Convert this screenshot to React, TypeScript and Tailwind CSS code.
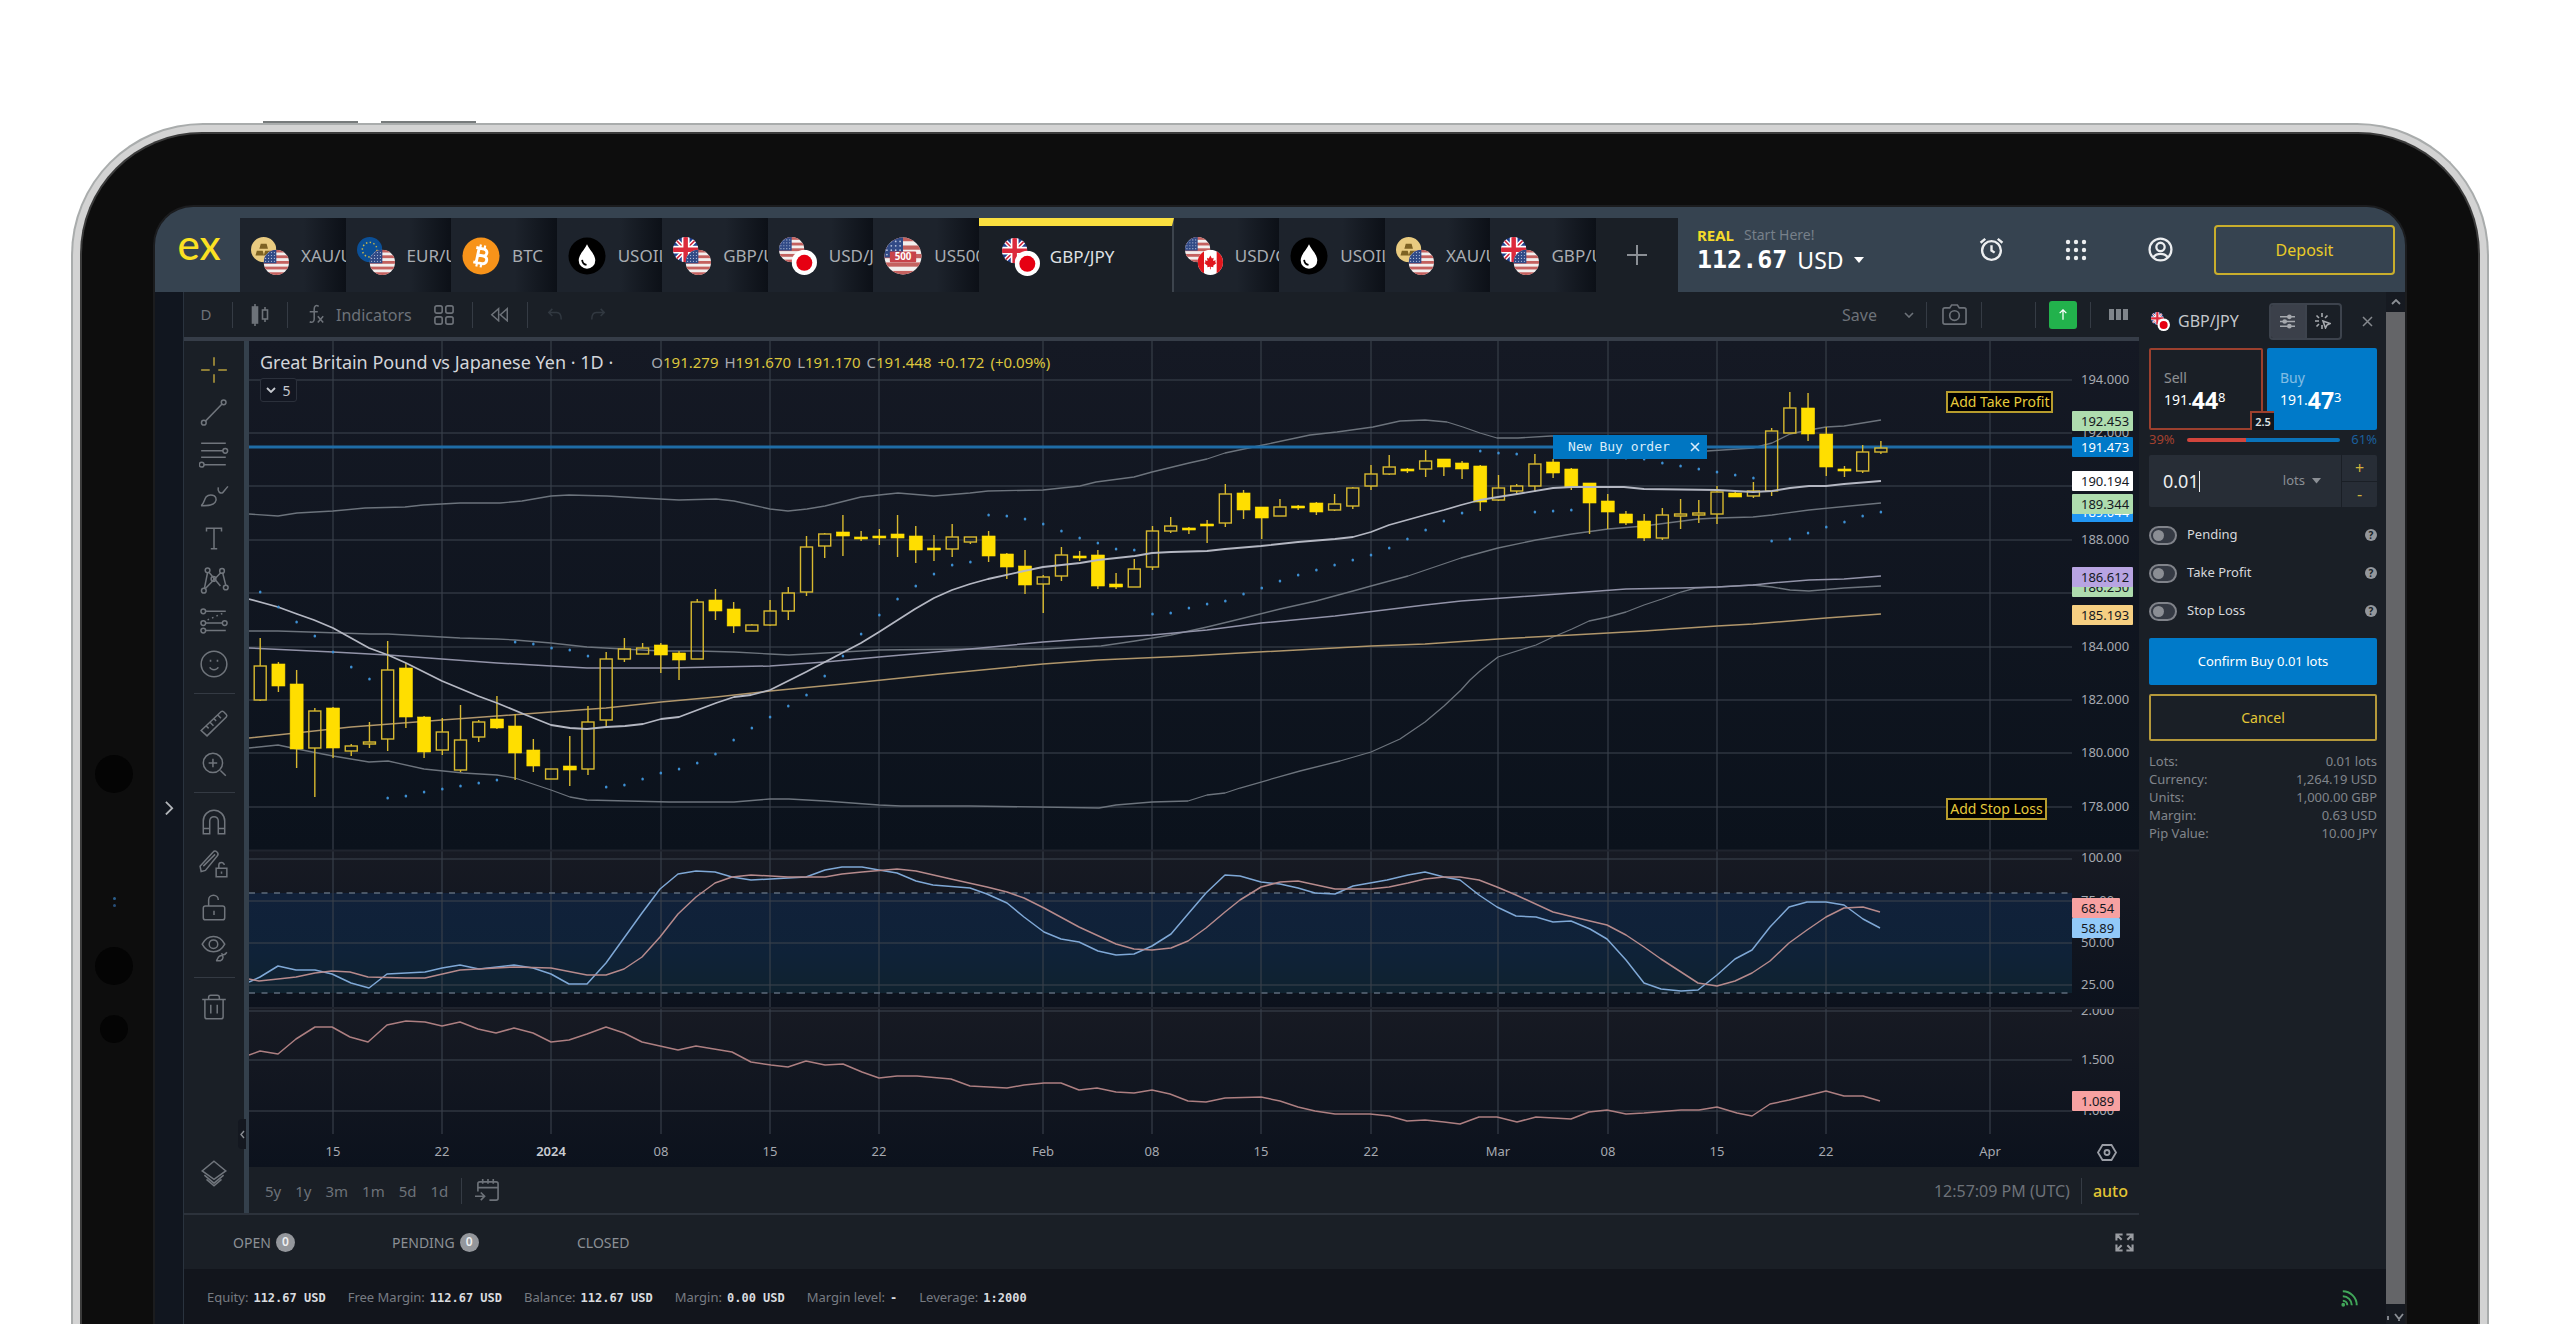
import { useId, useState } from "react";
import type { ReactNode } from "react";

/* ---------- flags and instrument badges ---------- */

type FlagKind = "us" | "uk" | "eu" | "jp" | "ca" | "xau";

function FlagArt({ kind }: { kind: FlagKind }) {
  switch (kind) {
    case "us":
      return (
        <g>
          <rect width="26" height="26" fill="#f3efee" />
          {[0, 1, 2, 3, 4].map((n) => (
            <rect key={n} y={n * 5.8} width="26" height="2.9" fill="#c4615f" />
          ))}
          <rect width="13" height="14" fill="#314a86" />
          {[2, 5, 8, 11].map((x) =>
            [3, 6, 9, 12].map((y) => <circle key={`${x}-${y}`} cx={x} cy={y} r=".6" fill="#b9c4dd" />),
          )}
        </g>
      );
    case "uk":
      return (
        <g>
          <rect width="26" height="26" fill="#21408f" />
          <path d="M0 0 26 26M26 0 0 26" stroke="#fff" strokeWidth="4.5" />
          <path d="M0 0 26 26M26 0 0 26" stroke="#d3273b" strokeWidth="1.6" />
          <path d="M13 0V26M0 13H26" stroke="#fff" strokeWidth="8" />
          <path d="M13 0V26M0 13H26" stroke="#dc2a3c" strokeWidth="4.6" />
        </g>
      );
    case "eu":
      return (
        <g>
          <rect width="26" height="26" fill="#0b4f96" />
          <circle cx="13" cy="13" r="7.5" fill="none" stroke="#c9b64a" strokeWidth="1.5" strokeDasharray="1.5 2.4" />
        </g>
      );
    case "jp":
      return (
        <g>
          <rect width="26" height="26" fill="#fff" />
          <circle cx="13" cy="13.5" r="8.2" fill="#e60012" />
        </g>
      );
    case "ca":
      return (
        <g>
          <rect width="26" height="26" fill="#fff" />
          <rect width="6.5" height="26" fill="#e0161c" />
          <rect x="19.5" width="6.5" height="26" fill="#e0161c" />
          <path
            d="M13 6l1.6 3 1.8-.6-.5 3.2 2.6-.8-.5 2 1.3.9-3.4 2.9.3 1.4-2.8-.4V20h-.8v-2.4l-2.8.4.3-1.4-3.4-2.9 1.3-.9-.5-2 2.6.8-.5-3.2 1.8.6z"
            fill="#e0161c"
          />
        </g>
      );
    case "xau":
      return (
        <g>
          <rect width="26" height="26" fill="#e9cb80" />
          <path d="M10 7h6l1.4 5H8.600zM6 14h6l1.400 5H4.600zM14.500 14h6l1.400 5h-8.800z" fill="#7d6223" />
        </g>
      );
  }
}

function FlagPair({ back, front, className }: { back: FlagKind; front: FlagKind; className: string }) {
  const id = useId();
  return (
    <svg viewBox="0 0 39 39" className={className} aria-hidden="true">
      <defs>
        <clipPath id={`${id}c`}>
          <circle cx="13" cy="13" r="13" />
        </clipPath>
      </defs>
      <g clipPath={`url(#${id}c)`}>
        <FlagArt kind={back} />
      </g>
      <g transform="translate(13 13)">
        <g clipPath={`url(#${id}c)`}>
          <FlagArt kind={front} />
        </g>
      </g>
    </svg>
  );
}

function BitcoinBadge() {
  return (
    <svg viewBox="0 0 39 39" className="size-[38px] shrink-0" aria-hidden="true">
      <circle cx="19.500" cy="19.500" r="19" fill="#f7931a" />
      <g transform="rotate(12 19.500 19.500)" fill="none" stroke="#fff" strokeWidth="3">
        <path d="M13 12h8c5 0 5 7 0 7h-5 6c5.500 0 5.500 8 0 8h-9M16 12v15" />
        <path d="M17 8v4M21.500 8v4M17 27v4M21.500 27v4" strokeWidth="2.200" />
      </g>
    </svg>
  );
}

function OilBadge() {
  return (
    <svg viewBox="0 0 39 39" className="size-[38px] shrink-0" aria-hidden="true">
      <circle cx="19.500" cy="19.500" r="19" fill="#000" />
      <path d="M19.500 7.500c2 5 8.500 10.500 8.500 16.500a8.500 8.500 0 0 1-17 0c0-6 6.500-11.500 8.500-16.500z" fill="#fff" />
      <path d="M14.500 23.500c.3 3 2 4.700 4.500 5.200" stroke="#000" strokeWidth="1.800" fill="none" />
    </svg>
  );
}

function IndexBadge() {
  const id = useId();
  return (
    <svg viewBox="0 0 39 39" className="size-[38px] shrink-0" aria-hidden="true">
      <defs>
        <clipPath id={`${id}c`}>
          <circle cx="19.500" cy="19.500" r="19" />
        </clipPath>
      </defs>
      <g clipPath={`url(#${id}c)`}>
        <g transform="scale(1.500)">
          <FlagArt kind="us" />
        </g>
        <rect x="6" y="15" width="27" height="11" rx="1" fill="#c8434a" />
      </g>
      <text x="19.500" y="24" textAnchor="middle" fontSize="10" fontWeight="700" fill="#fff" fontFamily="Noto Sans, sans-serif">
        500
      </text>
    </svg>
  );
}

/* ---------- header ---------- */

const pair = (back: FlagKind, front: FlagKind) => (
  <FlagPair back={back} front={front} className="size-[38px] shrink-0" />
);

const tabs: { name: string; icon: ReactNode; active?: boolean }[] = [
  { name: "XAU/USD", icon: pair("xau", "us") },
  { name: "EUR/USD", icon: pair("eu", "us") },
  { name: "BTC", icon: <BitcoinBadge /> },
  { name: "USOIL", icon: <OilBadge /> },
  { name: "GBP/USD", icon: pair("uk", "us") },
  { name: "USD/JPY", icon: pair("us", "jp") },
  { name: "US500", icon: <IndexBadge /> },
  { name: "GBP/JPY", icon: pair("uk", "jp"), active: true },
  { name: "USD/CAD", icon: pair("us", "ca") },
  { name: "USOIL", icon: <OilBadge /> },
  { name: "XAU/USD", icon: pair("xau", "us") },
  { name: "GBP/USD", icon: pair("uk", "us") },
];

function Header() {
  return (
    <header className="flex h-[85px] shrink-0 items-stretch bg-[#364350]">
      <a
        href="#home"
        className="flex w-[85px] shrink-0 items-start justify-center pt-[13px] pl-[3px] font-['Lato',sans-serif] text-[42px] leading-[48px] font-medium text-[#fbe122]"
      >
        ex
      </a>
      <nav className="mt-[11px] grid min-w-0 flex-1 grid-cols-[repeat(7,1fr)_195px_repeat(4,1fr)_82px] bg-[#1a1f26]">
        {tabs.map((t, i) =>
          t.active ? (
            <button
              key={i}
              className="flex items-center gap-[10px] border-t-8 border-r-2 border-t-[#fadf3f] border-r-[#3d444d] bg-[#1a1f26] pb-[4px] pl-[23px] text-[17px] text-[#dfe1e4]"
            >
              {t.icon}
              {t.name}
            </button>
          ) : (
            <button
              key={i}
              className="flex items-center gap-[12px] overflow-hidden bg-linear-to-r from-[#1d232c] from-60% to-[#0c1017] pt-[2px] pl-[11px] text-[17px] text-[#a9adb2]"
            >
              {t.icon}
              <span className="overflow-hidden whitespace-nowrap">{t.name}</span>
            </button>
          ),
        )}
        <button aria-label="Add instrument" className="flex items-center justify-center text-[#8b8f95]">
          <svg viewBox="0 0 22 22" className="size-[22px]" stroke="currentColor" strokeWidth="2">
            <path d="M11 1v20M1 11h20" />
          </svg>
        </button>
      </nav>
      <div className="flex w-[727px] shrink-0 items-center pr-[10px] pl-[19px]">
        <button className="flex flex-col text-left">
          <span className="flex gap-[10px] text-[15px] leading-[20px]">
            <b className="text-[#f5da2a]">REAL</b>
            <span className="text-[14px] text-[#77808a]">Start Here!</span>
          </span>
          <span className="flex items-center gap-[10px] text-[23px] leading-[30px] text-white">
            <b className="font-['DejaVu_Sans_Mono',monospace] text-[25px]">112.67</b>
            <span>USD</span>
            <svg viewBox="0 0 10 6" className="w-[10px]" fill="currentColor">
              <path d="M0 0h10L5 6z" />
            </svg>
          </span>
        </button>
        <div className="ml-auto flex items-center gap-[60px] pr-[41px] text-[#eceef0]">
          <button aria-label="Price alerts">
            <svg viewBox="0 0 24 24" className="size-[25px]" fill="none" stroke="currentColor" strokeWidth="2.300">
              <circle cx="12" cy="13" r="9" />
              <path d="M12 8v5l3 2M1.500 5.500 6 1.800M22.500 5.500 18 1.800" />
            </svg>
          </button>
          <button aria-label="Applications">
            <svg viewBox="0 0 24 24" className="size-[24px]" fill="currentColor">
              {[4, 12, 20].map((x) => [4, 12, 20].map((y) => <circle key={`${x}${y}`} cx={x} cy={y} r="2.200" />))}
            </svg>
          </button>
          <button aria-label="Profile">
            <svg viewBox="0 0 24 24" className="size-[25px]" fill="none" stroke="currentColor" strokeWidth="2.200">
              <circle cx="12" cy="12" r="10.500" />
              <circle cx="12" cy="9.500" r="4" />
              <path d="M5 19.500c3-4.500 11-4.500 14 0" />
            </svg>
          </button>
        </div>
        <button className="h-[50px] w-[181px] rounded-[4px] border-2 border-[#c9ae2c] text-[16px] text-[#e9cb27]">
          Deposit
        </button>
      </div>
    </header>
  );
}

/* ---------- chart toolbar ---------- */

const Sep = () => <span className="h-[26px] w-px bg-[#353b44]" />;

function TopToolbar() {
  return (
    <div className="flex h-[49px] shrink-0 items-center border-b-4 border-[#363d48] text-[16px] text-[#6d7279]">
      <button className="w-[48px] pr-[4px] text-[15px]">D</button>
      <Sep />
      <button aria-label="Candle style" className="flex w-[54px] justify-center">
        <svg viewBox="0 0 20 22" className="w-[20px]" fill="none" stroke="currentColor" strokeWidth="1.600">
          <path d="M5 0v3M5 19v3M15 3v3M15 15v3" />
          <rect x="2.500" y="3" width="5" height="16" fill="currentColor" />
          <rect x="12.500" y="6" width="5" height="9" />
        </svg>
      </button>
      <Sep />
      <button className="flex items-center gap-[11px] pl-[19px]">
        <svg viewBox="0 0 20 24" className="h-[23px] w-[18px]" fill="none" stroke="currentColor" strokeWidth="1.700">
          <path d="M13 3c-3-2-5-.5-5 3v11c0 3-2 4.500-5 3M3 9h9M12 14l6 7M18 14l-6 7" />
        </svg>
        <span>Indicators</span>
      </button>
      <button aria-label="Layouts" className="flex w-[60px] justify-center pl-[4px]">
        <svg viewBox="0 0 22 22" className="w-[20px]" fill="none" stroke="currentColor" strokeWidth="1.800">
          {[1, 13].map((x) => [1, 13].map((y) => <rect key={`${x}${y}`} x={x} y={y} width="8" height="8" rx="2" />))}
        </svg>
      </button>
      <Sep />
      <button aria-label="Replay" className="flex w-[54px] justify-center">
        <svg viewBox="0 0 22 18" className="w-[19px]" fill="none" stroke="currentColor" strokeWidth="1.700">
          <path d="M10 2v14L2 9zM20 2v14l-8-7z" />
        </svg>
      </button>
      <Sep />
      <button aria-label="Undo" className="flex w-[54px] justify-center text-[#313840]">
        <svg viewBox="0 0 18 14" className="w-[16px]" fill="none" stroke="currentColor" strokeWidth="1.700">
          <path d="M6 1 2 5l4 4M2 5h9c4 0 5 3 5 8" />
        </svg>
      </button>
      <button aria-label="Redo" className="flex w-[32px] justify-center text-[#313840]">
        <svg viewBox="0 0 18 14" className="w-[16px]" fill="none" stroke="currentColor" strokeWidth="1.700">
          <path d="m12 1 4 4-4 4M16 5H7C3 5 2 8 2 13" />
        </svg>
      </button>
      <button className="ml-auto pr-[27px]">Save</button>
      <button aria-label="Save options" className="pr-[12px]">
        <svg viewBox="0 0 10 6" className="w-[10px]" fill="none" stroke="currentColor" strokeWidth="1.600">
          <path d="m1 1 4 4 4-4" />
        </svg>
      </button>
      <Sep />
      <button aria-label="Snapshot" className="flex w-[54px] justify-center">
        <svg viewBox="0 0 26 22" className="w-[25px]" fill="none" stroke="currentColor" strokeWidth="1.700">
          <path d="M3 4h5l2-3h6l2 3h5a2 2 0 0 1 2 2v13a2 2 0 0 1-2 2H3a2 2 0 0 1-2-2V6a2 2 0 0 1 2-2z" />
          <circle cx="13" cy="12" r="5" />
        </svg>
      </button>
      <Sep />
      <span className="w-[53px]" />
      <Sep />
      <button aria-label="Publish" className="mx-[13px] flex h-[28px] w-[28px] items-center justify-center rounded-[3px] bg-[#22b24c] text-white">
        <svg viewBox="0 0 12 14" className="w-[10px]" fill="none" stroke="currentColor" strokeWidth="1.500">
          <path d="M6 13V1M2 5l4-4 4 4" />
        </svg>
      </button>
      <Sep />
      <button aria-label="Columns" className="mr-[11px] ml-[18px]">
        <svg viewBox="0 0 19 11" className="w-[19px]" fill="#80858b">
          <path d="M0 0h5v11H0zM7 0h5v11H7zM14 0h5v11h-5z" />
        </svg>
      </button>
    </div>
  );
}

/* ---------- drawing tools ---------- */

function Tool({ label, children, className = "h-[42px]" }: { label: string; children: ReactNode; className?: string }) {
  return (
    <button aria-label={label} className={`flex w-full shrink-0 items-center justify-center ${className}`}>
      <svg viewBox="0 0 28 28" className="size-[30px]" fill="none" stroke="currentColor" strokeWidth="1.400">
        {children}
      </svg>
    </button>
  );
}

const ToolSep = () => <hr className="my-[8px] w-[41px] shrink-0 border-[#343a43]" />;

function DrawingTools() {
  return (
    <div className="flex w-[65px] shrink-0 flex-col border-r-[5px] border-[#34404c]">
      <div className="relative flex flex-1 flex-col items-center pt-[8px] text-[#70757c]">
        <Tool label="Crosshair">
          <path d="M14 2v8M14 18v8M2 14h8M18 14h8" stroke="#b79f3c" />
        </Tool>
        <Tool label="Trend line">
          <path d="m6 22.500 15.500-16" />
          <circle cx="4.500" cy="24" r="2.200" />
          <circle cx="23" cy="5" r="2.200" />
        </Tool>
        <Tool label="Fib retracement">
          <path d="M2 4h23M2 11h20.500M2 17h23M4.500 24H25" />
          <circle cx="24.500" cy="11" r="2.200" />
          <circle cx="2.500" cy="24" r="2.200" />
        </Tool>
        <Tool label="Brush">
          <path d="M2 23c4-2 2-10 9-10 5 0 6 4 4 7-2 3-7 3-13 3zM18 6c-1 4 2 6 4 5l5-6" />
        </Tool>
        <Tool label="Text">
          <path d="M7 8V5h14v3M14 5v19M11 24h6" />
        </Tool>
        <Tool label="Patterns">
          <path d="m5 22 3-15M9.500 7 20 19.500M22 7l3 12M20.500 7 6 22M13 13l2 1" />
          <circle cx="8" cy="5" r="2.200" />
          <circle cx="21.500" cy="5.500" r="2.200" />
          <circle cx="4.500" cy="24" r="2.200" />
          <circle cx="25" cy="21" r="2.200" />
          <circle cx="13.500" cy="13" r="2.200" />
        </Tool>
        <Tool label="Forecasting">
          <path d="M6 4h19M6 15h16M6 22h19" />
          <path d="m8 12 14-6" strokeDasharray="1.500 3" />
          <circle cx="4" cy="4" r="2.200" />
          <circle cx="4" cy="15" r="2.200" />
          <circle cx="24" cy="15" r="2.200" />
          <circle cx="4" cy="22" r="2.200" />
        </Tool>
        <Tool label="Icons">
          <circle cx="14" cy="14" r="12" />
          <path d="M10 17c1.500 3 6.500 3 8 0" />
          <path d="M10 11h1.500M16.500 11H18" strokeWidth="2" />
        </Tool>
        <ToolSep />
        <Tool label="Measure" className="h-[41px]">
          <path d="M2 21 20.500 3.500a2 2 0 0 1 2.500 0L25.500 6a2 2 0 0 1 0 2.500L7.500 26zM7 17l2 2M10.500 13.500l3 3M14 10l2 2M17.500 6.500l3 3" />
        </Tool>
        <Tool label="Zoom in" className="h-[41px]">
          <circle cx="13" cy="13" r="9" />
          <path d="m20 20 5 5M13 9v8M9 13h8" />
        </Tool>
        <ToolSep />
        <Tool label="Magnet" className="h-[42px]">
          <path d="M4 25V13a10 10 0 0 1 20 0v12h-6V13a4 4 0 0 0-8 0v12zM4 20h6M18 20h6" />
        </Tool>
        <Tool label="Lock drawings" className="h-[42px]">
          <path d="M2 21 1 16 13 3a2.500 2.500 0 0 1 4 3.500L6 20zM4 16 15 5M16 18h10v8H16zM18.500 18v-3a2.500 2.500 0 0 1 5 0M21 21v2" />
        </Tool>
        <Tool label="Unlock all" className="h-[44px]">
          <rect x="4" y="13" width="20" height="13" rx="2" />
          <path d="M9 13V7.500a4.500 4.500 0 0 1 9 0M14 17.500v4" />
        </Tool>
        <Tool label="Hide drawings" className="h-[40px]">
          <path d="M3 9.500c5-9.500 16-9.500 21 0-5 9.500-16 9.500-21 0z" />
          <circle cx="13.500" cy="9.500" r="4" />
          <path d="M16 25c2-1 1-5 5-5 2 0 2 4-1 5zM21 18c1 2 3 2 5-1" />
        </Tool>
        <ToolSep />
        <Tool label="Delete" className="h-[42px]">
          <path d="M3 7h22M9 7V5a2 2 0 0 1 2-2h6a2 2 0 0 1 2 2v2M5.500 7v16a2 2 0 0 0 2 2h13a2 2 0 0 0 2-2V7M11 12v8M17 12v8" />
        </Tool>
        <div className="mt-auto mb-[20px]">
          <Tool label="Object tree" className="h-[40px]">
            <path d="M14 3 25 12 14 20 3 12zM5 16l9 7.500 9-7.500M7 20l7 6 7-6" />
          </Tool>
        </div>
        <button
          aria-label="Hide drawing tools"
          className="absolute right-[-2px] bottom-[64px] flex h-[30px] w-[8px] items-center justify-center rounded-l-[4px] bg-[#141820] text-[#8b8f95]"
        >
          <svg viewBox="0 0 5 9" className="w-[5px]" fill="none" stroke="currentColor" strokeWidth="1.400">
            <path d="M4 1 1 4.500 4 8" />
          </svg>
        </button>
      </div>
    </div>
  );
}

/* ---------- chart data ---------- */

const barX = (i: number) => 260.2 + 18.21 * i;

/* [high, open side, close side, low, filled] per trading day, in chart units */
const candles: [number, number, number, number, 0 | 1][] = [
  [638, 666, 700, 701, 0], [662, 664, 686, 692, 1], [670, 684, 749, 768, 1], [708, 711, 748, 797, 0],
  [707, 708, 748, 758, 1], [744, 746, 751, 756, 0], [722, 742, 744, 748, 0], [641, 670, 739, 751, 0],
  [663, 668, 717, 728, 1], [716, 717, 752, 758, 1], [718, 732, 750, 755, 0], [705, 740, 770, 772, 0],
  [720, 722, 737, 742, 0], [696, 719, 728, 729, 1], [714, 726, 753, 780, 1], [739, 750, 766, 772, 1],
  [769, 769, 779, 779, 0], [736, 766, 770, 786, 1], [706, 722, 769, 775, 0], [652, 659, 720, 726, 0],
  [638, 649, 659, 662, 0], [643, 648, 654, 654, 0], [643, 645, 655, 673, 1], [651, 653, 660, 680, 1],
  [599, 602, 659, 659, 0], [589, 600, 611, 620, 1], [602, 609, 626, 633, 1], [624, 625, 631, 631, 0],
  [600, 611, 625, 626, 0], [587, 593, 611, 620, 0], [536, 547, 592, 596, 0], [533, 534, 546, 558, 0],
  [515, 532, 536, 556, 1], [531, 537, 539, 541, 1], [529, 536, 538, 545, 1], [515, 534, 538, 557, 1],
  [526, 536, 550, 563, 1], [535, 548, 550, 561, 1], [524, 537, 549, 557, 0], [537, 537, 542, 544, 0],
  [531, 536, 556, 562, 1], [553, 554, 567, 579, 1], [550, 566, 585, 594, 1], [575, 577, 584, 613, 0],
  [547, 555, 576, 581, 0], [551, 556, 558, 561, 1], [550, 555, 586, 589, 1], [573, 584, 587, 589, 1],
  [559, 569, 587, 587, 0], [526, 531, 567, 570, 0], [517, 526, 531, 533, 0], [527, 528, 530, 534, 1],
  [520, 524, 526, 543, 1], [484, 494, 523, 527, 0], [490, 493, 510, 519, 1], [507, 507, 518, 539, 1],
  [499, 507, 516, 516, 0], [505, 506, 508, 510, 1], [502, 503, 512, 515, 1], [494, 504, 510, 511, 0],
  [487, 488, 506, 509, 0], [465, 474, 486, 490, 0], [455, 467, 474, 475, 0], [468, 469, 471, 473, 1],
  [450, 461, 469, 477, 0], [459, 459, 467, 476, 1], [461, 463, 469, 479, 1], [465, 466, 502, 511, 1],
  [475, 488, 500, 501, 0], [484, 486, 491, 495, 0], [454, 464, 486, 492, 0], [459, 462, 473, 478, 1],
  [468, 469, 487, 490, 1], [483, 483, 503, 534, 1], [494, 501, 512, 529, 1], [511, 514, 523, 525, 1],
  [514, 521, 538, 541, 1], [508, 515, 538, 540, 0], [499, 514, 516, 529, 0], [500, 513, 515, 523, 0],
  [486, 492, 514, 524, 0], [491, 493, 497, 497, 1], [482, 491, 496, 498, 0], [428, 431, 491, 496, 0],
  [392, 408, 433, 433, 0], [393, 408, 434, 441, 1], [427, 434, 467, 476, 1], [466, 469, 471, 477, 1],
  [445, 452, 471, 473, 0], [441, 448, 452, 454, 0],
];

const sar = [
  592, 607, 622, 636, 652, 667, 679, 798, 796, 792, 789, 786, 783, 780, 642, 644, 648, 650, 656, 787, 785, 779,
  773, 769, 763, 754, 740, 728, 717, 706, 695, 676, 656, 634, 615, 599, 586, 574, 565, 562, 515, 516, 519, 524,
  531, 538, 543, 549, 550, 614, 613, 608, 604, 601, 594, 588, 581, 575, 570, 565, 560, 555, 548, 539, 530, 521,
  513, 451, 453, 454, 512, 511, 510, 455, 456, 458, 459, 463, 466, 469, 472, 475, 478, 541, 539, 533, 527, 522,
  516, 512,
];

const maFast =
  "249,599 278,607 297,614 314,620 333,628 369,648 388,655 406,663 442,681 478,696 497,703 526,715 551,725 570,728 587,729 606,727 625,726 643,724 661,719 679,717 716,703 734,697 751,695 770,690 806,672 842,653 861,643 879,632 915,609 934,598 952,590 970,584 988,579 1024,571 1043,567 1080,563 1098,560 1135,556 1152,553 1171,552 1207,551 1225,549 1261,546 1298,542 1335,539 1353,537 1371,532 1389,525 1425,515 1444,510 1461,505 1480,500 1498,497 1517,494 1553,488 1572,487 1624,487 1644,489 1717,490 1753,492 1772,491 1790,488 1809,486 1826,486 1844,484 1881,481";
const upperBand =
  "249,514 278,516 297,513 333,511 365,508 405,507 423,505 460,503 500,503 522,501 551,496 569,495 607,496 641,498 679,500 716,499 734,501 752,505 770,509 788,511 807,509 825,506 861,497 879,495 898,493 934,496 970,493 988,491 1043,490 1080,486 1096,482 1134,477 1152,472 1189,463 1207,459 1225,453 1263,445 1310,435 1337,432 1373,427 1400,421 1425,420 1447,422 1463,427 1480,433 1497,438 1518,438 1551,436 1580,436 1640,448 1680,452 1707,451 1753,448 1772,443 1790,434 1809,430 1826,427 1844,426 1881,420";
const midBand =
  "249,631 278,631 370,634 388,634 460,638 497,639 515,640 551,643 587,647 624,649 661,651 698,651 734,652 770,654 789,655 843,652 879,650 970,649 1043,649 1101,646 1135,641 1171,635 1207,627 1240,619 1280,609 1316,601 1353,591 1371,586 1408,576 1461,558 1498,548 1536,540 1572,534 1608,529 1644,526 1698,519 1717,518 1753,517 1772,515 1809,510 1881,503";
const maSlow =
  "249,648 333,652 388,655 442,659 497,663 551,666 587,668 669,668 770,666 825,662 879,657 970,649 1043,642 1098,638 1152,635 1207,630 1261,623 1335,616 1425,605 1461,601 1517,597 1572,593 1626,589 1681,588 1717,587 1753,585 1772,583 1809,580 1844,579 1881,576";
const maLong =
  "249,738 351,727 442,720 497,716 551,712 606,708 661,702 716,697 770,691 843,684 940,674 1043,664 1098,660 1188,656 1240,653 1371,646 1425,644 1498,639 1572,635 1644,631 1717,626 1753,624 1790,621 1826,618 1881,614";
const lowerBand =
  "249,748 278,745 297,749 333,756 369,762 388,761 424,769 463,773 497,775 515,778 551,790 570,797 587,800 669,802 734,802 770,799 789,799 825,801 879,805 901,806 970,806 1099,808 1116,805 1152,802 1188,801 1207,795 1225,793 1240,788 1268,780 1300,771 1340,761 1371,752 1400,739 1425,722 1444,706 1461,690 1470,680 1480,671 1498,657 1536,645 1553,637 1572,629 1589,621 1608,617 1626,612 1644,605 1662,599 1681,592 1695,588 1717,587 1753,585 1772,587 1790,590 1809,591 1844,588 1881,586";
const stochK =
  "249,982 260,977 278,966 296,970 315,970 332,974 351,983 369,988 387,974 425,972 442,968 460,965 479,969 514,965 533,968 551,974 569,984 587,984 606,963 642,913 660,889 678,874 696,871 715,872 732,877 751,880 788,878 806,877 825,870 842,867 862,867 879,870 897,873 916,881 933,885 970,888 987,894 1007,903 1024,917 1044,932 1061,939 1079,942 1098,951 1116,955 1134,954 1152,946 1171,934 1188,914 1206,893 1225,875 1240,876 1261,882 1280,884 1298,888 1315,893 1335,894 1353,886 1387,880 1408,875 1425,872 1444,877 1460,880 1479,895 1497,907 1516,916 1536,917 1553,922 1571,921 1590,929 1607,939 1626,960 1644,983 1661,989 1681,991 1698,990 1717,975 1735,959 1752,950 1770,927 1789,907 1807,902 1826,902 1844,905 1863,919 1880,928";
const stochD =
  "249,979 259,981 278,979 296,977 315,973 332,971 350,972 368,977 406,978 425,978 460,970 514,967 551,968 587,975 606,975 624,969 642,957 660,937 678,914 696,897 715,883 732,877 751,875 788,877 825,877 842,874 862,872 897,869 916,871 951,879 987,887 1007,892 1024,898 1044,908 1079,927 1116,944 1134,949 1152,950 1171,948 1188,941 1206,928 1225,912 1240,900 1261,887 1280,882 1298,881 1335,889 1370,889 1389,887 1408,883 1425,879 1444,877 1460,877 1479,880 1497,887 1516,895 1553,912 1590,921 1607,925 1626,935 1644,947 1661,959 1698,983 1717,986 1735,981 1752,973 1770,961 1789,943 1807,930 1826,917 1844,908 1863,907 1880,912";
const volatility =
  "249,1055 260,1051 278,1054 296,1039 315,1027 332,1027 350,1037 368,1042 387,1025 406,1021 425,1022 442,1026 460,1022 478,1029 496,1033 514,1028 533,1033 551,1042 569,1040 587,1034 606,1027 624,1033 642,1042 678,1050 696,1046 732,1052 751,1062 771,1065 788,1067 806,1061 825,1065 843,1064 862,1072 879,1078 897,1076 917,1076 951,1079 970,1086 1007,1088 1024,1085 1044,1083 1061,1083 1079,1090 1097,1088 1116,1092 1134,1093 1152,1090 1170,1094 1188,1101 1206,1102 1225,1098 1261,1097 1280,1101 1298,1107 1315,1111 1335,1114 1370,1114 1389,1116 1407,1121 1425,1120 1444,1122 1460,1124 1479,1117 1497,1117 1517,1122 1536,1117 1571,1119 1589,1112 1607,1110 1626,1114 1644,1113 1681,1110 1699,1110 1717,1107 1737,1113 1752,1116 1770,1104 1789,1100 1826,1091 1844,1096 1863,1096 1880,1101";

const dates: [number, string][] = [
  [333, "15"], [442, "22"], [551, "2024"], [661, "08"], [770, "15"], [879, "22"], [1043, "Feb"], [1152, "08"],
  [1261, "15"], [1371, "22"], [1498, "Mar"], [1608, "08"], [1717, "15"], [1826, "22"], [1990, "Apr"],
];

const priceRows: [number, string][] = [
  [380, "194.000"], [433, "192.000"], [486, "190.000"], [540, "188.000"], [593, "186.000"], [647, "184.000"],
  [700, "182.000"], [753, "180.000"], [807, "178.000"],
];

const lowerRows: [number, string][] = [
  [858, "100.00"], [901, "75.00"], [943, "50.00"], [985, "25.00"], [1060, "1.500"], [1111, "1.000"],
];

/* [top, text, fill, text colour, width]; later entries cover earlier ones */
const priceTags: [number, string, string, string, number][] = [
  [502, "189.044", "#2196f3", "#ffffff", 61],
  [411, "192.453", "#aedcae", "#14181f", 61],
  [437, "191.473", "#0079c8", "#ffffff", 61],
  [471, "190.194", "#ffffff", "#14181f", 61],
  [494, "189.344", "#aedcae", "#14181f", 61],
  [577, "186.250", "#aedcae", "#14181f", 61],
  [567, "186.612", "#b8a4e2", "#14181f", 61],
  [605, "185.193", "#f6cf82", "#14181f", 61],
  [898, "68.54", "#f7a1a1", "#14181f", 48],
  [918, "58.89", "#92c9f8", "#14181f", 48],
  [1091, "1.089", "#f7a1a1", "#14181f", 48],
];

function ChartDrawing() {
  return (
    <svg
      viewBox="249 341 1890 826"
      className="block h-auto w-full font-['Noto_Sans',sans-serif]"
      role="img"
      aria-label="GBP/JPY daily candles with moving averages, bands and oscillators"
    >
      <defs>
        <linearGradient id="paneMain" x1="0" y1="0" x2="0" y2="1">
          <stop offset="0" stopColor="#151924" />
          <stop offset="1" stopColor="#0b121c" />
        </linearGradient>
        <linearGradient id="paneLow" x1="0" y1="0" x2="0" y2="1">
          <stop offset="0" stopColor="#171a23" />
          <stop offset="1" stopColor="#0c121d" />
        </linearGradient>
        <linearGradient id="range" x1="0" y1="0" x2="0" y2="1">
          <stop offset="0" stopColor="#11213a" />
          <stop offset=".6" stopColor="#0f2238" />
          <stop offset="1" stopColor="#0f222f" />
        </linearGradient>
        <clipPath id="lowerPane">
          <rect x="249" y="1009" width="1890" height="160" />
        </clipPath>
      </defs>
      <rect x="249" y="341" width="1890" height="509" fill="url(#paneMain)" />
      <rect x="249" y="850" width="1890" height="158" fill="url(#paneLow)" />
      <rect x="249" y="1008" width="1890" height="159" fill="url(#paneLow)" />
      <rect x="249" y="893" width="1823" height="100" fill="url(#range)" />

      <g stroke="#3a414c" strokeOpacity=".75" strokeWidth="1.500">
        {dates.map(([x]) => (
          <path key={x} d={`M${x} 341V1134`} />
        ))}
        {priceRows.map(([y]) => (
          <path key={y} d={`M249 ${y}H2072`} />
        ))}
        {[859, 901, 943, 985, 1011, 1060, 1111].map((y) => (
          <path key={y} d={`M249 ${y}H2072`} />
        ))}
      </g>
      <path d="M249 850.500H2139M249 1008H2139" stroke="#20242e" strokeWidth="2" />
      <path d="M249 893H2072M249 993H2072" stroke="#5d6b7b" strokeWidth="1.500" strokeDasharray="6 6.500" />

      <g fill="none" strokeWidth="1.300" strokeLinejoin="round">
        <g stroke="#6c737c">
          <polyline points={upperBand} />
          <polyline points={midBand} />
          <polyline points={lowerBand} />
        </g>
        <polyline points={maSlow} stroke="#9293a8" strokeWidth="1.500" />
        <polyline points={maLong} stroke="#b0966b" strokeWidth="1.500" />
      </g>
      <path d="M249 447H2072" stroke="#1f6ca6" strokeWidth="3" />

      {candles.map(([high, top, bottom, low, filled], i) => {
        const x = barX(i);
        const h = Math.max(bottom - top, 2);
        return (
          <g key={i} stroke="#d8b92f" strokeWidth="1.400">
            <path d={`M${x} ${high}V${top}M${x} ${top + h}V${low}`} />
            {filled ? (
              <rect x={x - 6.5} y={top} width="13" height={h} fill="#ffde00" stroke="#ffde00" strokeWidth=".6" />
            ) : (
              <rect x={x - 6} y={top} width="12" height={h} fill="none" />
            )}
          </g>
        );
      })}
      <polyline points={maFast} fill="none" stroke="#b4b7c2" strokeWidth="1.800" strokeLinejoin="round" />
      {sar.map((y, i) => (
        <ellipse key={i} cx={barX(i)} cy={y} rx="1.300" ry="1.500" fill="#3d8fd2" />
      ))}

      <g fill="none" strokeWidth="1.500" strokeLinejoin="round">
        <polyline points={stochK} stroke="#7fa8d6" />
        <polyline points={stochD} stroke="#b68a8c" />
        <polyline points={volatility} stroke="#ad7f81" />
      </g>

      <g fill="#a6a9b0" fontSize="13">
        {[...priceRows, ...lowerRows].map(([y, text]) => (
          <text key={y} x="2081" y={y + 4}>
            {text}
          </text>
        ))}
        <g clipPath="url(#lowerPane)">
          <text x="2081" y="1015">
            2.000
          </text>
        </g>
      </g>
      {priceTags.map(([y, text, fill, ink, width]) => (
        <g key={y}>
          <rect x="2072" y={y} width={width} height="20" rx="1" fill={fill} />
          <text x="2081" y={y + 15} fontSize="13" fill={ink}>
            {text}
          </text>
        </g>
      ))}
      <g fill="#a6a9b0" fontSize="13" textAnchor="middle">
        {dates.map(([x, text]) => (
          <text key={x} x={x} y="1156" fontWeight={text === "2024" ? 600 : 400} fill={text === "2024" ? "#c9ccd2" : undefined}>
            {text}
          </text>
        ))}
      </g>
      <g fill="none" stroke="#9a9da5" strokeWidth="1.800">
        <path d="m2102.500 1145h9l4.500 7.500-4.500 7.500h-9l-4.500-7.500z" />
        <circle cx="2107" cy="1152.500" r="2.500" />
      </g>
    </svg>
  );
}

const quote: [string, string][] = [
  ["O", "191.279"],
  ["H", "191.670"],
  ["L", "191.170"],
  ["C", "191.448"],
];

function Chart() {
  return (
    <div className="relative">
      <ChartDrawing />
      <div className="absolute top-[9px] left-[11px] flex flex-col items-start gap-1">
        <div className="flex items-center gap-[38px]">
          <h1 className="text-[18px] leading-[24px] text-[#d3d5da]">Great Britain Pound vs Japanese Yen · 1D ·</h1>
          <p className="flex gap-[6px] text-[15px] text-[#dcc53d]">
            {quote.map(([k, v]) => (
              <span key={k}>
                <span className="text-[#a6a9b0]">{k}</span>
                {v}
              </span>
            ))}
            <span>+0.172</span>
            <span>(+0.09%)</span>
          </p>
        </div>
        <button className="flex h-[24px] w-[37px] items-center justify-center gap-[6px] rounded-[3px] border border-[#2b303b] bg-[#131722] text-[14px] text-[#c6c9cf]">
          <svg viewBox="0 0 10 6" className="w-[10px]" fill="none" stroke="currentColor" strokeWidth="1.800">
            <path d="m1 1 4 4 4-4" />
          </svg>
          5
        </button>
      </div>
      <div className="absolute top-[11.4%] left-[69%] flex h-[24px] w-[154px] items-center justify-between bg-[#0076c2] pr-[7px] pl-[15px] font-['DejaVu_Sans_Mono',monospace] text-[13px] text-[#d9ecf9]">
        New Buy order
        <button aria-label="Remove order">
          <svg viewBox="0 0 10 10" className="w-[10px]" stroke="currentColor" strokeWidth="1.600">
            <path d="m1 1 8 8M9 1 1 9" />
          </svg>
        </button>
      </div>
      <button className="absolute top-[6%] left-[89.8%] h-[22px] border-2 border-[#b79c2d] bg-black px-[2px] text-[14px] leading-[18px] text-[#e6ca3c]">
        Add Take Profit
      </button>
      <button className="absolute top-[55.3%] left-[89.8%] h-[22px] border-2 border-[#b79c2d] bg-black px-[2px] text-[14px] leading-[18px] text-[#e6ca3c]">
        Add Stop Loss
      </button>
    </div>
  );
}

function RangeBar() {
  return (
    <div className="flex h-[46px] items-center px-4 pt-[2px] text-[15px] text-[#6d7279]">
      <div className="flex gap-[14px]">
        {["5y", "1y", "3m", "1m", "5d", "1d"].map((r) => (
          <button key={r}>{r}</button>
        ))}
      </div>
      <span className="mx-[13px] h-[26px] w-px bg-[#353b44]" />
      <button aria-label="Go to date">
        <svg viewBox="0 0 26 24" className="w-[25px]" fill="none" stroke="currentColor" strokeWidth="1.700">
          <path d="M3 13V5a2 2 0 0 1 2-2h17a2 2 0 0 1 2 2v15a2 2 0 0 1-2 2h-7M3 9h21M8 0v5M13.500 0v5M19 0v5M0 18h9M6 14l4 4-4 4" />
        </svg>
      </button>
      <span className="ml-auto text-[16px]">12:57:09 PM (UTC)</span>
      <span className="mx-[11px] h-[26px] w-px bg-[#353b44]" />
      <button className="mr-[-5px] text-[16px] font-medium text-[#e2c534]">auto</button>
    </div>
  );
}

/* ---------- order panel ---------- */

function PriceButton({ side, big, pip, className }: { side: string; big: string; pip: string; className: string }) {
  return (
    <button className={`flex h-[82px] flex-1 flex-col justify-center pt-[2px] pl-[13px] text-left text-white ${className}`}>
      <span className="text-[14px] leading-[20px] opacity-50">{side}</span>
      <span className="flex items-end text-[14px] leading-[24px]">
        191.<b className="text-[23px]">{big}</b>
        <span className="self-start text-[13px] leading-[18px]">{pip}</span>
      </span>
    </button>
  );
}

function ToggleRow({ label }: { label: string }) {
  const [on, setOn] = useState(false);
  return (
    <div className="flex h-[38px] items-center justify-between">
      <label className="flex items-center gap-[10px] text-[13px] text-[#d6d8dc]">
        <input type="checkbox" checked={on} onChange={() => setOn(!on)} className="peer sr-only" />
        <span className="flex h-[19px] w-[28px] items-center rounded-full border-2 border-[#80838a] bg-[#353a44] px-[2px] peer-checked:justify-end">
          <span className="size-[11px] rounded-full bg-[#8b8e94]" />
        </span>
        {label}
      </label>
      <button
        aria-label={`About ${label}`}
        className="flex size-[12px] items-center justify-center rounded-full bg-[#94979c] text-[10px] leading-none font-bold text-[#1a1f26]"
      >
        ?
      </button>
    </div>
  );
}

const details: [string, string][] = [
  ["Lots:", "0.01 lots"],
  ["Currency:", "1,264.19 USD"],
  ["Units:", "1,000.00 GBP"],
  ["Margin:", "0.63 USD"],
  ["Pip Value:", "10.00 JPY"],
];

function OrderPanel() {
  return (
    <aside className="w-[247px] shrink-0 bg-[#1a1f26] pr-[9px] pl-[10px]">
      <div className="mt-[10px] flex h-[38px] items-center">
        <FlagPair back="uk" front="jp" className="mx-[2px] size-[19px]" />
        <span className="ml-[6px] text-[16px] text-[#c4c7cb]">GBP/JPY</span>
        <div className="ml-auto flex h-[37px] w-[73px] overflow-hidden rounded-[4px] border-2 border-[#3d434d] text-[#a6a9ae]">
          <button aria-label="Regular form" className="flex flex-1 items-center justify-center bg-[#3b404a]">
            <svg viewBox="0 0 16 16" className="w-[15px]" fill="currentColor" stroke="currentColor" strokeWidth="1.600">
              <path d="M0 3h16M0 8h16M0 13h16" />
              <circle cx="10" cy="3" r="1.700" />
              <circle cx="5" cy="8" r="1.700" />
              <circle cx="10" cy="13" r="1.700" />
            </svg>
          </button>
          <button aria-label="One-click form" className="flex flex-1 items-center justify-center border-l-2 border-[#3d434d]">
            <svg viewBox="0 0 16 16" className="w-[16px]" fill="none" stroke="currentColor" strokeWidth="1.600">
              <path d="M7 0v4M1.500 2.500 4 5M0 8h4M1.500 13.500 4 11M12.500 2.500 10 5M7 12v4" />
              <path d="m8 8 7 2.500-3 1.500-1.500 3z" />
            </svg>
          </button>
        </div>
        <button aria-label="Close panel" className="mr-[4px] ml-[20px] text-[#85888d]">
          <svg viewBox="0 0 11 11" className="w-[11px]" stroke="currentColor" strokeWidth="1.500">
            <path d="m1 1 9 9M10 1 1 10" />
          </svg>
        </button>
      </div>

      <div className="relative mt-[8px] flex gap-1">
        <PriceButton side="Sell" big="44" pip="8" className="rounded-[2px] border-2 border-[#9c402e]" />
        <PriceButton side="Buy" big="47" pip="3" className="rounded-[2px] bg-[#007ac9]" />
        <span className="absolute bottom-0 left-[101px] h-[19px] w-[24px] border-t-2 border-l-2 border-[#9c402e] bg-[#12161d] text-center text-[11px] leading-[17px] font-semibold text-[#dfe1e4]">
          2.5
        </span>
      </div>
      <div className="flex h-[20px] items-center justify-between text-[13px]">
        <span className="text-[#a3412f]">39%</span>
        <span className="flex h-[4px] w-[153px]">
          <span className="w-[39%] rounded-l-full bg-[#d2453c]" />
          <span className="flex-1 rounded-r-full bg-[#0a73ba]" />
        </span>
        <span className="text-[#1a5f9c]">61%</span>
      </div>

      <div className="mt-[5px] mb-[9px] flex h-[52px] gap-px">
        <div className="flex min-w-0 flex-1 items-center rounded-l-[2px] bg-[#272d36] pr-[20px] pl-[14px]">
          <input
            aria-label="Volume"
            defaultValue="0.01"
            className="field-sizing-content min-w-0 bg-transparent text-[18px] text-[#eceef0] outline-none"
          />
          <span className="h-[21px] w-px bg-[#eceef0]" />
          <div className="relative ml-auto flex items-center gap-[7px] text-[13px] text-[#8b8f95]">
            <select aria-label="Volume unit" className="field-sizing-content appearance-none bg-transparent outline-none">
              <option>lots</option>
            </select>
            <svg viewBox="0 0 10 6" className="w-[9px]" fill="currentColor">
              <path d="M0 0h10L5 6z" />
            </svg>
          </div>
        </div>
        <div className="flex w-[35px] flex-col gap-px text-[16px] text-[#cfb43a]">
          <button aria-label="Increase volume" className="flex-1 rounded-tr-[2px] bg-[#272d36] leading-none">
            +
          </button>
          <button aria-label="Decrease volume" className="flex-1 rounded-br-[2px] bg-[#272d36] leading-none">
            -
          </button>
        </div>
      </div>

      <ToggleRow label="Pending" />
      <ToggleRow label="Take Profit" />
      <ToggleRow label="Stop Loss" />

      <button className="mt-[8px] h-[47px] w-full rounded-[2px] bg-[#007ac9] text-[13px] text-white">
        Confirm Buy 0.01 lots
      </button>
      <button className="mt-[9px] h-[47px] w-full rounded-[2px] border-2 border-[#b5993b] text-[14px] text-[#e3c636]">
        Cancel
      </button>
      <dl className="mt-[11px] text-[13px] leading-[18px] text-[#81858b]">
        {details.map(([k, v]) => (
          <div key={k} className="flex justify-between">
            <dt>{k}</dt>
            <dd>{v}</dd>
          </div>
        ))}
      </dl>
    </aside>
  );
}

/* ---------- bottom bars ---------- */

const Badge = () => (
  <span className="ml-[5px] flex size-[19px] items-center justify-center rounded-full bg-[#94979c] text-[12px] font-semibold text-[#eceef0]">
    0
  </span>
);

function OrdersBar() {
  return (
    <div className="flex h-[56px] shrink-0 items-center border-t-2 border-[#2c323b] pr-[5px] pl-[49px] text-[14px] text-[#8b8f95]">
      <button className="flex w-[159px] items-center">
        OPEN <Badge />
      </button>
      <button className="flex w-[185px] items-center">
        PENDING <Badge />
      </button>
      <button>CLOSED</button>
      <button aria-label="Full screen" className="ml-auto">
        <svg viewBox="0 0 20 20" className="w-[19px]" fill="none" stroke="#999ca1" strokeWidth="2.200">
          <path d="M1.500 8V1.500H8M2 2l5 5M12 1.500h6.500V8M18 2l-5 5M1.500 12v6.500H8M2 18l5-5M18.500 12v6.500H12M18 18l-5-5" />
        </svg>
      </button>
    </div>
  );
}

const account: [string, string][] = [
  ["Equity:", "112.67 USD"],
  ["Free Margin:", "112.67 USD"],
  ["Balance:", "112.67 USD"],
  ["Margin:", "0.00 USD"],
  ["Margin level:", "-"],
  ["Leverage:", "1:2000"],
];

function StatusBar() {
  return (
    <footer className="flex h-[55px] shrink-0 items-center gap-[22px] bg-[#12151c] pt-[2px] pr-[27px] pl-[23px] text-[13px] text-[#777b82]">
      {account.map(([k, v]) => (
        <span key={k} className="flex items-center gap-[5px]">
          {k}
          <b className="font-['DejaVu_Sans_Mono',monospace] text-[12px] text-[#d9dbdf]">{v}</b>
        </span>
      ))}
      <svg viewBox="0 0 20 20" className="ml-auto w-[18px]" fill="none" stroke="#41a65a" strokeWidth="2.200" aria-label="Connected">
        <path d="M2 13a5 5 0 0 1 5 5M2 8a10 10 0 0 1 10 10M2 2.500A15.500 15.500 0 0 1 17.500 18" />
        <circle cx="2.500" cy="17.500" r="1" fill="#41a65a" />
      </svg>
    </footer>
  );
}

/* ---------- page ---------- */

export default function App() {
  return (
    <div className="flex h-screen flex-col overflow-hidden bg-white px-[71px] pt-[121px] font-['Noto_Sans',sans-serif]">
      <div className="flex shrink-0 gap-[23px] pl-[192px]">
        <span className="h-[2px] w-[95px] bg-[#777b7c]" />
        <span className="h-[2px] w-[95px] bg-[#777b7c]" />
      </div>
      <div className="flex min-h-0 flex-1 rounded-t-[132px] border-x-2 border-t-2 border-[#a9acac] bg-[#d3d3d3] px-[7px] pt-[7px]">
        <div className="relative flex min-w-0 flex-1 rounded-t-[122px] border-x-2 border-t-2 border-[#3b3b3b] bg-[#0d0d0d] px-[73px] pt-[73px]">
          <div className="absolute top-[621px] left-[13px] flex flex-col items-center">
            <span className="size-[38px] rounded-full bg-[#040404]" />
            <span className="mt-[90px] flex h-[38px] w-[14px] flex-col items-center justify-center gap-[4px]">
              <span className="h-[3px] w-[3px] rounded-full bg-[#2b5f8c]" />
              <span className="h-[3px] w-[3px] rounded-full bg-[#274e78]" />
            </span>
            <span className="mt-[26px] size-[38px] rounded-full bg-[#040404]" />
            <span className="mt-[30px] size-[28px] rounded-full bg-[#040404]" />
          </div>
          <div className="flex min-w-0 flex-1 flex-col overflow-hidden rounded-t-[38px] bg-[#1a1f26] ring-2 ring-[#1b1c1e]">
            <Header />
            <div className="flex min-h-0 flex-1">
              <div className="flex w-[29px] shrink-0 flex-col border-r border-[#2a333e] bg-[#11161f] pt-[509px]">
                <button aria-label="Expand sidebar" className="flex justify-center text-[#b3b6ba]">
                  <svg viewBox="0 0 10 16" className="w-[9px]" fill="none" stroke="currentColor" strokeWidth="2">
                    <path d="m1 1 7 7-7 7" />
                  </svg>
                </button>
              </div>
              <div className="flex min-w-0 flex-1 flex-col">
                <div className="flex min-h-0 flex-1">
                  <main className="flex min-w-0 flex-1 flex-col">
                    <TopToolbar />
                    <div className="flex">
                      <DrawingTools />
                      <div className="min-w-0 flex-1">
                        <Chart />
                        <RangeBar />
                      </div>
                    </div>
                    <OrdersBar />
                  </main>
                  <OrderPanel />
                </div>
                <StatusBar />
              </div>
              <div className="flex w-[19px] shrink-0 flex-col items-center bg-[#161a21] text-[#8b8f95]">
                <span className="flex h-[20px] items-center">
                  <svg viewBox="0 0 10 6" className="w-[10px]" fill="none" stroke="currentColor" strokeWidth="1.800">
                    <path d="m1 5 4-4 4 4" />
                  </svg>
                </span>
                <span className="w-full flex-1 bg-[#646568]" />
                <span className="flex h-[20px] items-end pb-[3px]">
                  <svg viewBox="0 0 18 8" className="w-[18px]" fill="none" stroke="currentColor" strokeWidth="1.800">
                    <path d="M1 3v4M8 1l4 5 4-5M12 5v3" />
                  </svg>
                </span>
              </div>
            </div>
          </div>
        </div>
      </div>
    </div>
  );
}
